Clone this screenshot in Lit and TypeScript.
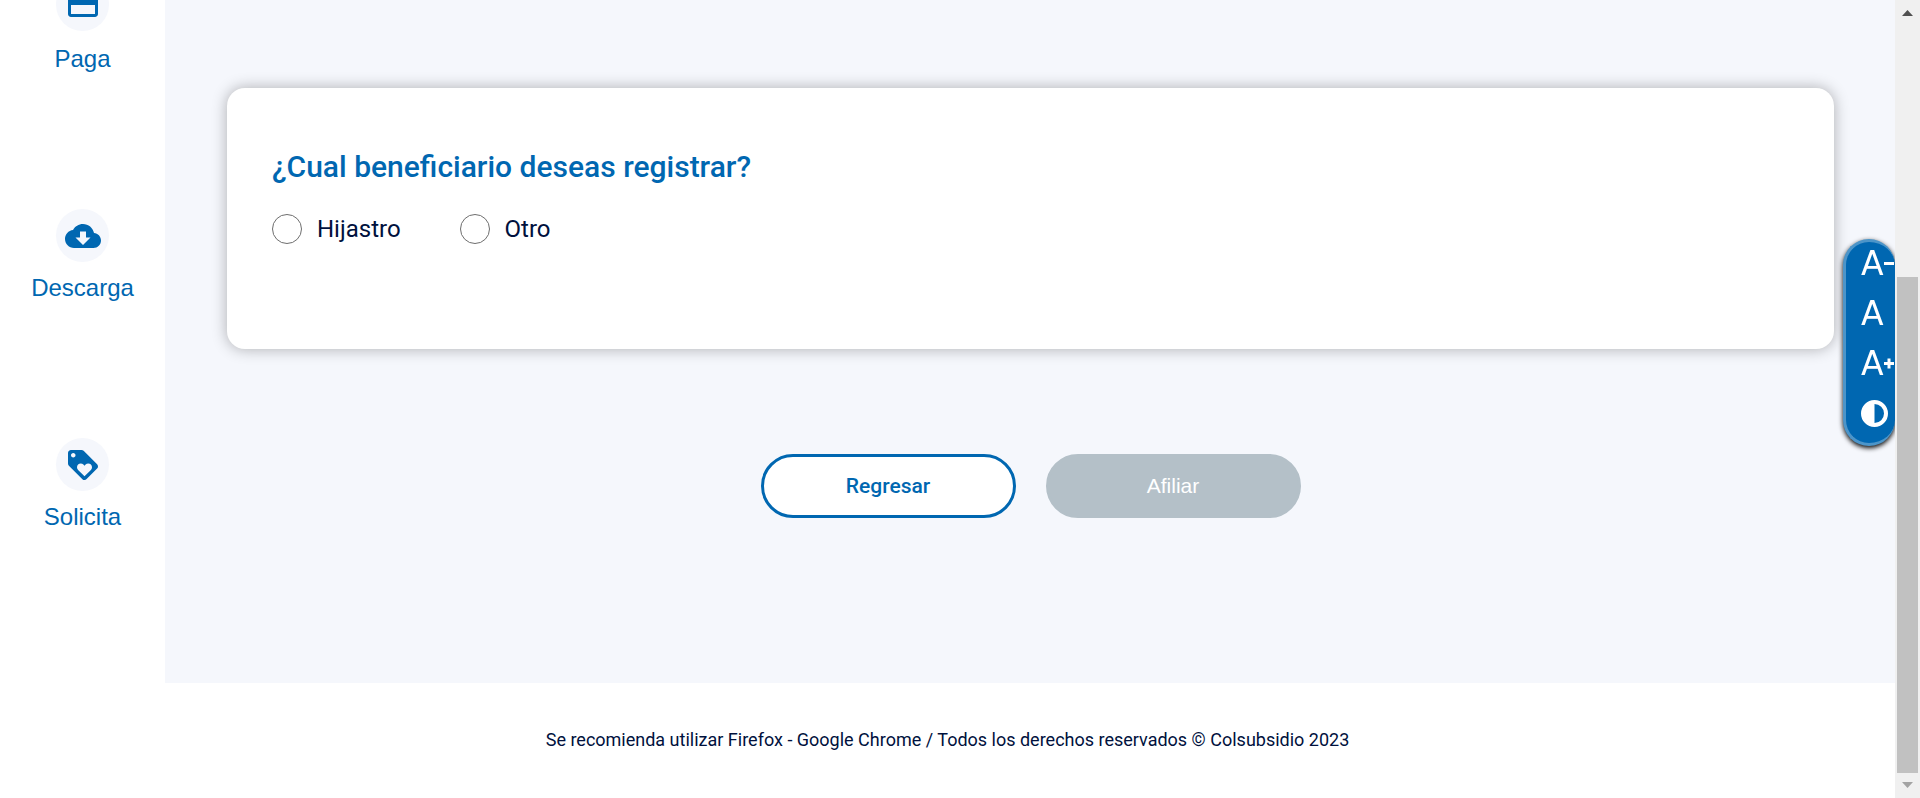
import { LitElement, html, css, svg } from "lit";
import { customElement, state } from "lit/decorators.js";

const CARD = svg`<path d="M20 4H4c-1.11 0-1.99.89-1.99 2L2 18c0 1.11.89 2 2 2h16c1.11 0 2-.89 2-2V6c0-1.11-.89-2-2-2zm0 14H4v-6h16v6zm0-10H4V6h16v2z"/>`;
const CLOUD = svg`<path d="M19.35 10.04C18.67 6.59 15.64 4 12 4 9.11 4 6.6 5.64 5.35 8.04 2.34 8.36 0 10.91 0 14c0 3.31 2.69 6 6 6h13c2.76 0 5-2.24 5-5 0-2.64-2.05-4.78-4.65-4.96zM17 13l-5 5-5-5h3V9h4v4h3z"/>`;
const LOYALTY = svg`<path d="M21.41 11.58l-9-9C12.05 2.22 11.55 2 11 2H4c-1.1 0-2 .9-2 2v7c0 .55.22 1.05.59 1.42l9 9c.36.36.86.58 1.41.58.55 0 1.05-.22 1.41-.59l7-7c.37-.36.59-.86.59-1.41 0-.55-.23-1.06-.59-1.42zM5.5 7C4.67 7 4 6.33 4 5.5S4.67 4 5.5 4 7 4.67 7 5.5 6.33 7 5.5 7zm11.77 8.27L13 19.54l-4.27-4.27C8.28 14.81 8 14.19 8 13.5c0-1.38 1.12-2.5 2.5-2.5.69 0 1.32.28 1.77.74l.73.72.73-.73c.45-.45 1.08-.73 1.77-.73 1.38 0 2.5 1.12 2.5 2.5 0 .69-.28 1.32-.73 1.77z"/>`;

const LINKS = [
  { label: "Paga", icon: CARD },
  { label: "Descarga", icon: CLOUD },
  { label: "Solicita", icon: LOYALTY },
];

const OPTIONS = ["Hijastro", "Otro"];

@customElement("side-nav")
class SideNav extends LitElement {
  static styles = css`
    :host {
      display: block;
      background: #fff;
    }
    .list {
      display: flex;
      flex-direction: column;
      gap: 136px;
      margin-top: -22px;
    }
    .link {
      display: flex;
      flex-direction: column;
      align-items: center;
      gap: 12px;
      color: #0067b1;
      font: 24px/28px "Liberation Sans", Arial, sans-serif;
      text-decoration: none;
    }
    .link:first-child {
      gap: 14px;
    }
    .disc {
      display: grid;
      place-items: center;
      width: 53px;
      height: 53px;
      border-radius: 50%;
      background: #f5f7fc;
    }
    .icon {
      width: 36px;
      height: 36px;
      fill: currentColor;
    }
  `;

  render() {
    return html`<nav class="list">
      ${LINKS.map(
        (l) => html`<a class="link" href="#">
          <span class="disc"><svg class="icon" viewBox="0 0 24 24" aria-hidden="true">${l.icon}</svg></span>
          <span>${l.label}</span>
        </a>`
      )}
    </nav>`;
  }
}

@customElement("accessibility-bar")
class AccessibilityBar extends LitElement {
  static styles = css`
    :host {
      position: fixed;
      top: 30vh;
      right: 25px;
      margin: -8px 0;
      padding: 8px 0 8px 8px;
      overflow: hidden;
    }
    .bar {
      display: flex;
      flex-direction: column;
      justify-content: center;
      box-sizing: border-box;
      width: 52px;
      height: 207px;
      padding-bottom: 8px;
      border: 3px solid #4c95c9;
      border-right-width: 0;
      border-radius: 26px;
      background: #0067b1;
      box-shadow: 0 2px 5px #000;
    }
    .tool {
      flex: none;
      display: flex;
      align-items: center;
      height: 50px;
      padding: 0 0 0 15px;
      border: 0;
      background: none;
      color: #fff;
      font: 33px/36px "DejaVu Sans", sans-serif;
      cursor: pointer;
    }
    .sign {
      flex: none;
      width: 11px;
      height: 11px;
      stroke: currentColor;
      stroke-width: 3;
    }
    .contrast {
      width: 27px;
      height: 27px;
      fill: currentColor;
    }
  `;

  render() {
    return html`<div class="bar" role="toolbar" aria-label="Accesibilidad">
      <button class="tool" aria-label="Reducir letra">
        A<svg class="sign" viewBox="0 0 11 11" aria-hidden="true"><path d="M0 5.5H10" /></svg>
      </button>
      <button class="tool" aria-label="Letra normal">A</button>
      <button class="tool" aria-label="Aumentar letra">
        A<svg class="sign" viewBox="0 0 11 11" aria-hidden="true"><path d="M0 5.5H10M5 0.5V10.5" /></svg>
      </button>
      <button class="tool" aria-label="Contraste">
        <svg class="contrast" viewBox="0 0 27 27" aria-hidden="true">
          <path fill-rule="evenodd" d="M13.5 0a13.5 13.5 0 1 0 0 27a13.5 13.5 0 0 0 0-27zM13.5 4a9.5 9.5 0 0 1 0 19z" />
        </svg>
      </button>
    </div>`;
  }
}

@customElement("scroll-rail")
class ScrollRail extends LitElement {
  static styles = css`
    :host {
      display: flex;
      flex-direction: column;
      align-items: center;
      position: sticky;
      top: 0;
      height: 100vh;
      background: #f0f0f0;
    }
    .arrow {
      flex: none;
      width: 25px;
      height: 25px;
      fill: #505050;
    }
    .end {
      fill: #a3a3a3;
    }
    .lane {
      flex: 1;
      display: flex;
      flex-direction: column;
      justify-content: flex-end;
    }
    .thumb {
      width: 21px;
      height: 66.3%;
      background: #c1c1c1;
    }
  `;

  render() {
    return html`
      <svg class="arrow" viewBox="0 0 25 25" aria-hidden="true"><path d="M7 16L12.5 10L18 16z" /></svg>
      <div class="lane"><div class="thumb"></div></div>
      <svg class="arrow end" viewBox="0 0 25 25" aria-hidden="true"><path d="M7 9L12.5 15L18 9z" /></svg>
    `;
  }
}

@customElement("app-root")
class AppRoot extends LitElement {
  @state() private selected = "";

  static styles = css`
    :host {
      display: grid;
      grid-template-columns: 1fr 25px;
      min-height: 100vh;
      overflow: hidden;
      background: #fff;
      color: #00113d;
      font-family: "Roboto", sans-serif;
    }
    .page {
      display: flex;
      flex-direction: column;
    }
    .body {
      display: grid;
      grid-template-columns: 165px 1fr;
    }
    .main {
      padding: 88px 61px 165px 62px;
      background: #f5f7fc;
    }
    .card {
      margin: 0;
      padding: 61px 45px 105px;
      border-radius: 18px;
      background: #fff;
      box-shadow: 0 0 15px rgba(0, 0, 0, 0.3);
    }
    .title {
      margin: 0 0 29px;
      color: #0067b1;
      font-size: 30px;
      line-height: 36px;
      font-weight: 500;
    }
    .options {
      display: flex;
      gap: 59px;
    }
    .option {
      display: flex;
      align-items: center;
      gap: 15px;
      font-size: 24px;
      line-height: 30px;
    }
    .radio {
      appearance: none;
      box-sizing: border-box;
      width: 30px;
      height: 30px;
      margin: 0;
      border: 1px solid #6e6e6e;
      border-radius: 50%;
      background: #fff;
    }
    .radio:checked {
      border: 9px solid #0067b1;
    }
    .actions {
      display: flex;
      justify-content: center;
      gap: 30px;
      margin-top: 105px;
    }
    .button {
      box-sizing: border-box;
      width: 255px;
      height: 64px;
      border: 3px solid #0067b1;
      border-radius: 32px;
      background: #fff;
      color: #0067b1;
      font: 500 21px/24px "Roboto", sans-serif;
    }
    .button:disabled {
      border-color: #b4c0c8;
      background: #b4c0c8;
      color: #fff;
      font: 21px/24px "Liberation Sans", Arial, sans-serif;
    }
    .footer {
      padding: 46px 24px;
      text-align: center;
      font-size: 18px;
      line-height: 22px;
    }
  `;

  render() {
    return html`
      <div class="page">
        <div class="body">
          <side-nav></side-nav>
          <main class="main">
            <section class="card">
              <h2 class="title" id="question">¿Cual beneficiario deseas registrar?</h2>
              <div class="options" role="radiogroup" aria-labelledby="question">
                ${OPTIONS.map(
                  (o) => html`<label class="option">
                    <input
                      class="radio"
                      type="radio"
                      name="beneficiario"
                      .value=${o}
                      @change=${() => (this.selected = o)}
                    />
                    ${o}
                  </label>`
                )}
              </div>
            </section>
            <div class="actions">
              <button class="button">Regresar</button>
              <button class="button" ?disabled=${!this.selected}>Afiliar</button>
            </div>
          </main>
        </div>
        <footer class="footer">
          Se recomienda utilizar Firefox - Google Chrome / Todos los derechos reservados © Colsubsidio 2023
        </footer>
      </div>
      <scroll-rail></scroll-rail>
      <accessibility-bar></accessibility-bar>
    `;
  }
}
